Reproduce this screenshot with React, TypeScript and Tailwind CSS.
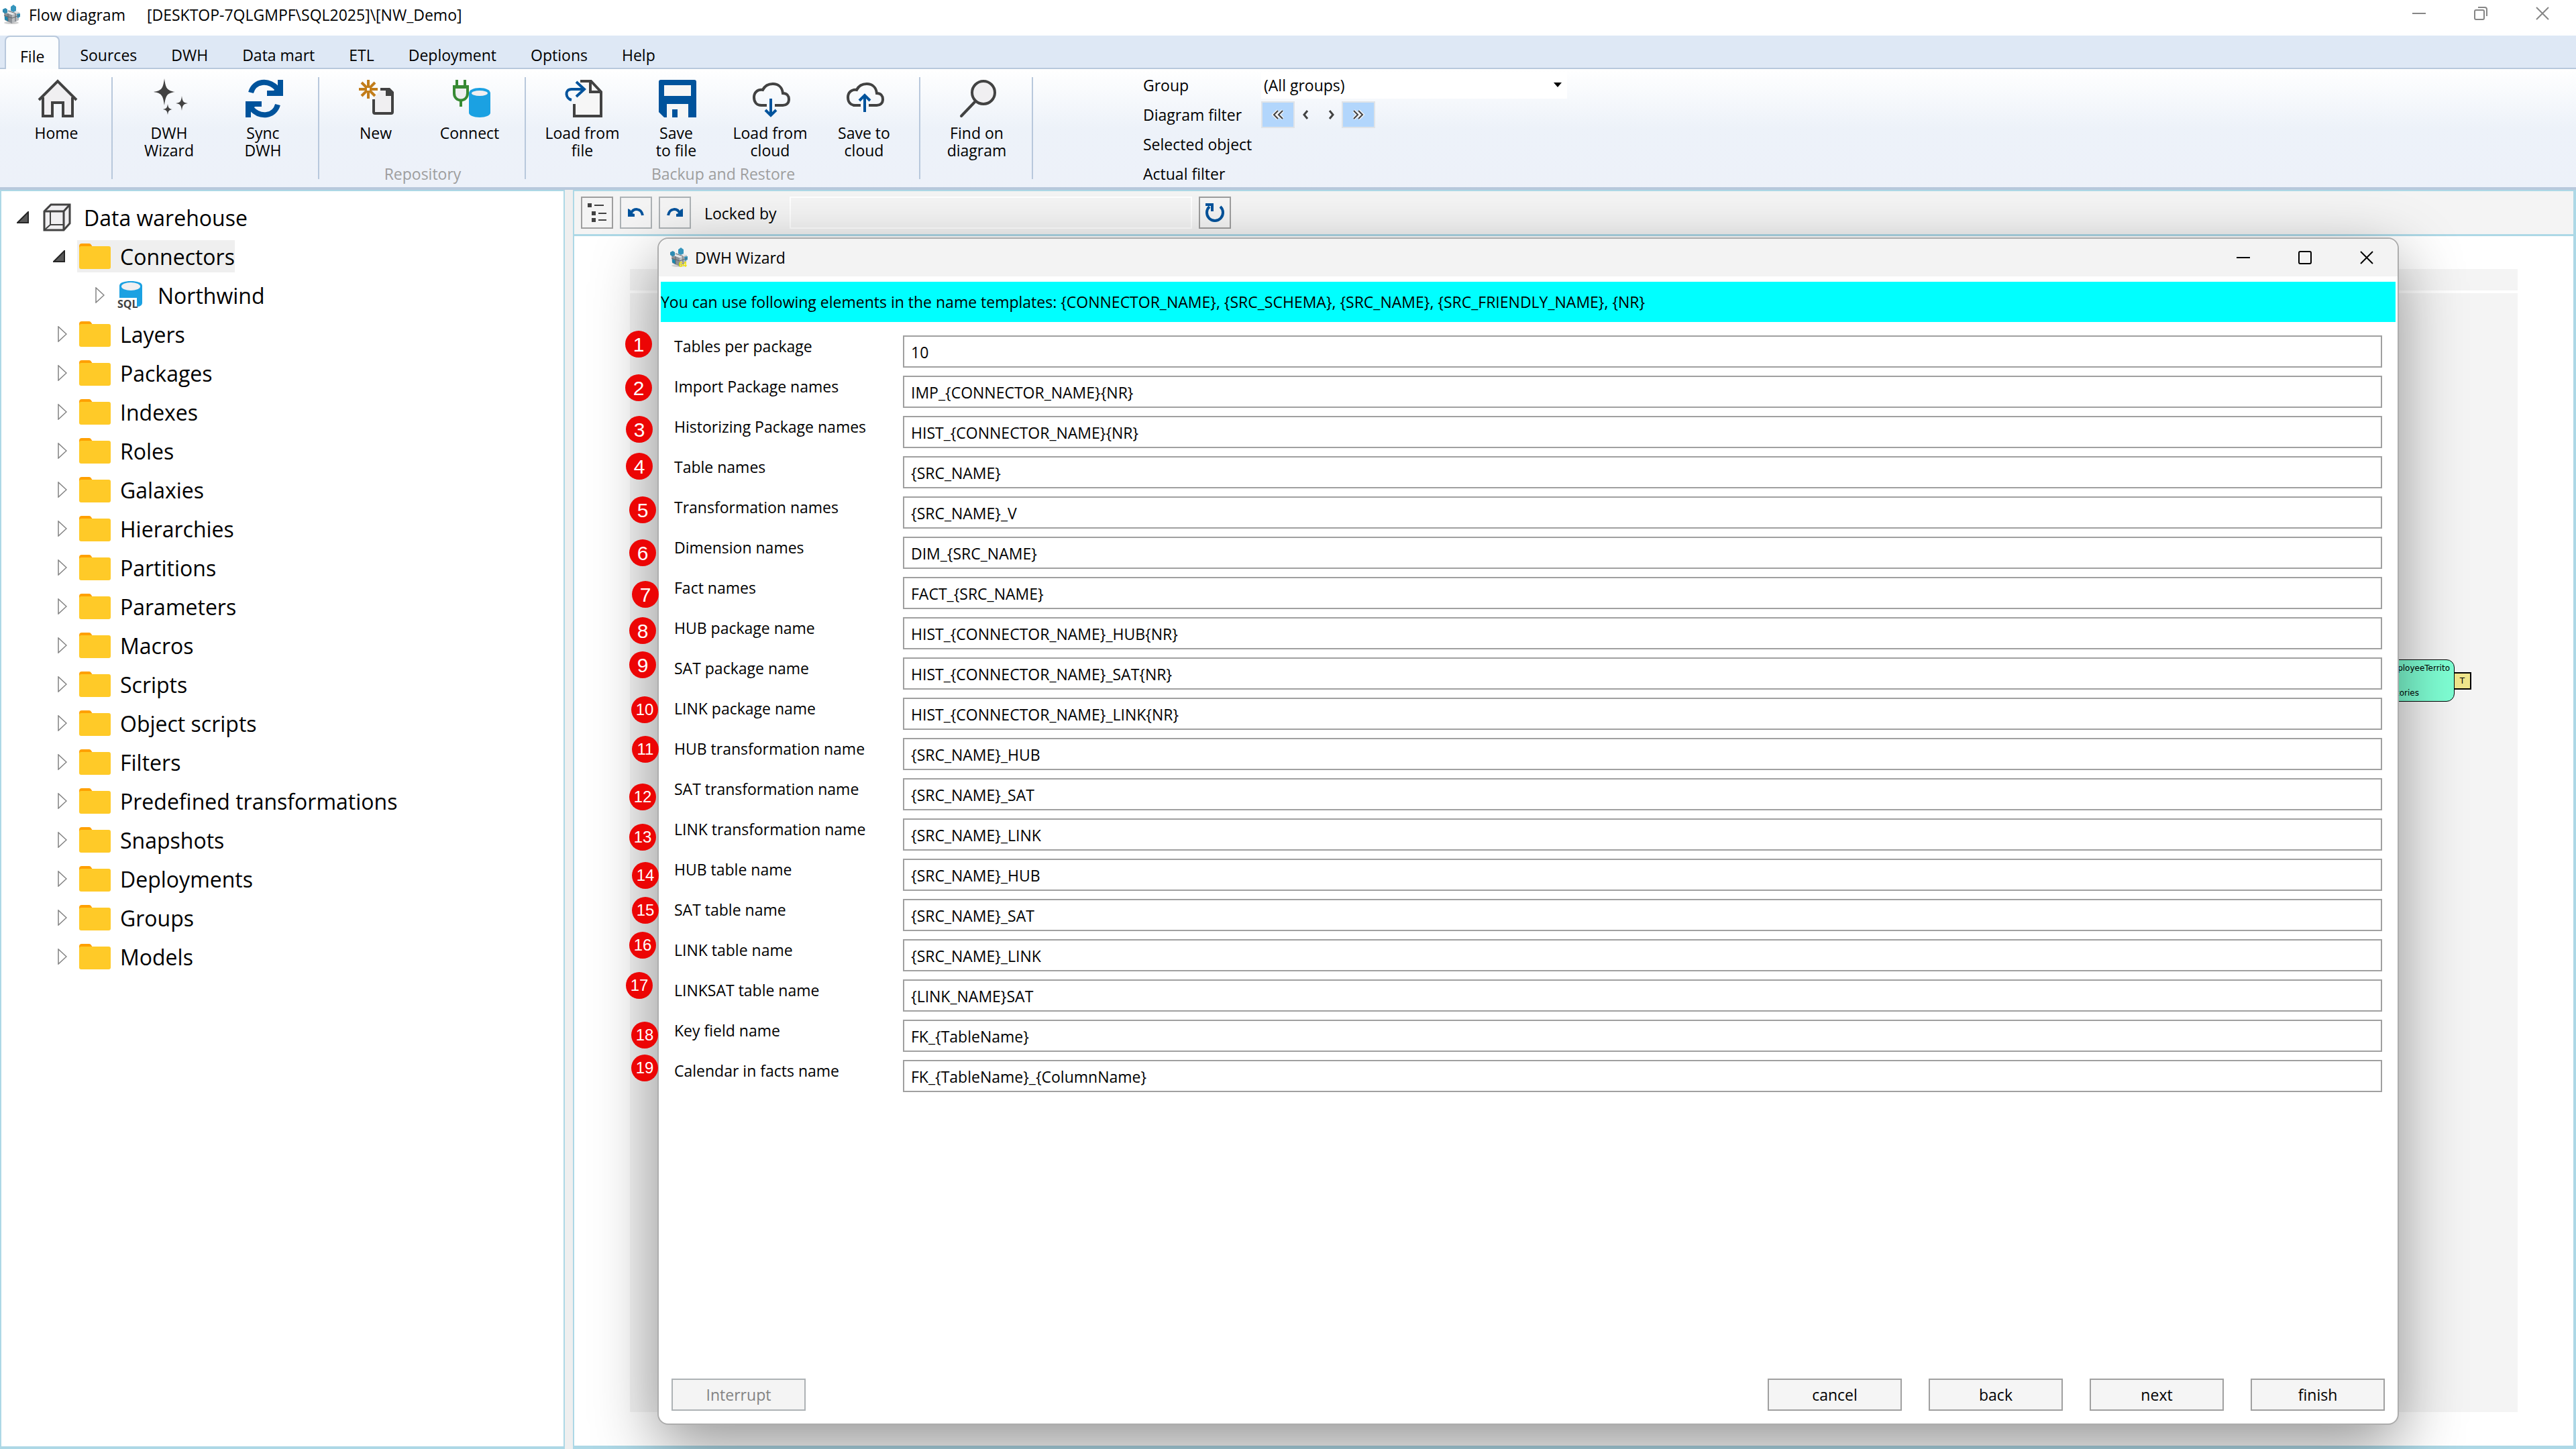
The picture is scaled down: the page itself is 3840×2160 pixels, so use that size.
import type { ReactNode } from "react";
import clsx from "clsx";

/* ---------- ribbon icons, all on a 64 grid ---------- */

const Icon64 = ({ children }: { children: ReactNode }) => (
  <svg viewBox="0 0 64 64" className="ml-1 size-16 shrink-0" fill="none" aria-hidden="true">
    {children}
  </svg>
);

const HomeIcon = () => (
  <Icon64>
    <path d="M10 30L32 7L54 30V58H40V38H24V58H10Z" fill="#f0eff1" />
    <path d="M4 34L32 6L60 34" stroke="#424242" strokeWidth="4" />
    <path d="M10 30V58H24V38H40V58H54V30" stroke="#424242" strokeWidth="4" />
  </Icon64>
);

const WizardIcon = () => (
  <Icon64>
    <g fill="#424242">
      <path d="M23 2C25 17 27 20 39 22C27 24 25 27 23 42C21 27 19 24 7 22C19 20 21 17 23 2Z" />
      <path d="M49 28C50 36 51 38 58 39C51 40 50 42 49 50C48 42 47 40 40 39C47 38 48 36 49 28Z" />
      <path d="M28 40C29 46 30 47 35 48C30 49 29 50 28 56C27 50 26 49 21 48C26 47 27 46 28 40Z" />
    </g>
  </Icon64>
);

const SyncArrow = () => (
  <>
    <path d="M12 23C17 5 38 3 51 17" stroke="#00539c" strokeWidth="8" />
    <path d="M60 4V28H36V20H46L52 14V4Z" fill="#00539c" />
  </>
);

const SyncIcon = () => (
  <Icon64>
    <SyncArrow />
    <g transform="rotate(180 32 32)">
      <SyncArrow />
    </g>
  </Icon64>
);

const NewIcon = () => (
  <Icon64>
    <path d="M27 32L38 18H51L55 23V54H27Z" fill="#f0eff1" />
    <path d="M27 33V52Q27 54 29 54H53Q55 54 55 52V24" stroke="#424242" strokeWidth="4" />
    <path d="M37 16H51L57 22V28H45V20H37Z" fill="#424242" />
    <path d="M19 4V16M19 20V32M5 18H17M21 18H33M9 8L17 16M21 20L29 28M29 8L21 16M17 20L9 28" stroke="#c27d1a" strokeWidth="4" />
  </Icon64>
);

const ConnectIcon = () => (
  <Icon64>
    <path d="M29 24C29 19 36 16 45 16S61 19 61 24V53C61 57 54 60 45 60S29 57 29 53Z" fill="#1ba1e2" />
    <ellipse cx="45" cy="24" rx="12" ry="4" fill="#f0eff1" />
    <path d="M7 15H27V24C27 38 7 38 7 24Z" fill="#f0eff1" stroke="#388a34" strokeWidth="4" />
    <path d="M5 14H29M11 4V14M23 4V14M17 34V44" stroke="#388a34" strokeWidth="4" />
  </Icon64>
);

const LoadFileIcon = () => (
  <Icon64>
    <path d="M28 6H43L58 21V58H18V38L34 20Z" fill="#f6f6f6" />
    <path d="M27 6H43L58 22V58H18V40" stroke="#424242" strokeWidth="4" />
    <path d="M42 6V22H58" stroke="#424242" strokeWidth="4" />
    <path d="M14 34C5 32 3 18 14 18H33M21 7L33 18L21 29" stroke="#00539c" strokeWidth="4" />
  </Icon64>
);

const SaveIcon = () => (
  <Icon64>
    <path d="M4 7Q4 4 7 4H57Q60 4 60 7V60H12L4 52Z" fill="#00539c" />
    <path d="M12 12H52V28H12ZM16 40H48V60H16Z" fill="#f6f6f6" />
    <path d="M24 48H32V60H24Z" fill="#00539c" />
  </Icon64>
);

const CloudIcon = ({ up }: { up?: boolean }) => (
  <Icon64>
    <path
      d="M25 42H17C10 42 6 37 6 30C6 23 11 18 19 19C22 13 27 10 34 10C42 10 48 15 49 24C55 24 58 28 58 33C58 39 54 42 49 42H37"
      stroke="#424242"
      strokeWidth="4"
    />
    {up ? (
      <path d="M31 52V27M23 35L31 27L39 35" stroke="#00539c" strokeWidth="4" />
    ) : (
      <path d="M31 32V57M23 49L31 57L39 49" stroke="#00539c" strokeWidth="4" />
    )}
  </Icon64>
);

const FindIcon = () => (
  <Icon64>
    <circle cx="40" cy="23" r="17" fill="#f0eff1" stroke="#424242" strokeWidth="4" />
    <path d="M28 36L7 58" stroke="#424242" strokeWidth="4" strokeLinecap="round" />
  </Icon64>
);

/* ---------- logo, tree and toolbar icons ---------- */

const CubeLogo = ({ badge }: { badge?: boolean }) => (
  <svg viewBox="0 0 28 30" className="h-[30px] w-7 shrink-0" aria-hidden="true">
    <ellipse cx="14" cy="27" rx="11" ry="2" fill="#d0d0d0" />
    <path d="M3 11L15 15V28L4 23Z" fill="#8d9297" />
    <path d="M15 15L26 11L25 23L15 28Z" fill="#b9bcbf" />
    <path d="M3 11L14 7L26 11L15 15Z" fill="#e4e6e8" />
    <path d="M13 3L17 0L21 3V9L17 11L13 9Z" fill="#3595bd" />
    <path d="M1 7L5 5L8 7V12L4 13L1 11Z" fill="#2f8bb2" />
    <path d="M4 17L9 19V25L4 22Z" fill="#1c86ae" />
    <path d="M22 14L27 13V18L23 20Z" fill="#2d8fb8" />
    <path d="M3 16L15 20L26 16M9 13V25M20 13V25M9 9L20 13" stroke="#5f656a" strokeWidth="1" fill="none" />
    {badge && (
      <text x="14" y="29" fill="#f2e600" className="font-['Liberation_Sans'] text-[11px] font-bold">
        64
      </text>
    )}
  </svg>
);

const WarehouseIcon = () => (
  <svg viewBox="0 0 42 42" className="size-[42px]" fill="none" stroke="#424242" strokeWidth="3" aria-hidden="true">
    <path d="M2 12L12 2H40V30L31 40H2Z" fill="#f0eff1" />
    <path d="M2 12H31M31 12L40 2M31 12V40" />
    <path d="M11 12V32H31M11 32L2 40" strokeWidth="2" />
  </svg>
);

const FolderIcon = () => (
  <svg viewBox="0 0 47 38" className="h-[38px] w-[47px]" aria-hidden="true">
    <path d="M0 4Q0 0 4 0H15Q17 0 18 2L20 5V12H0Z" fill="#ffa000" />
    <rect y="4" width="47" height="34" rx="3" fill="#ffca28" />
  </svg>
);

const SqlIcon = () => (
  <svg viewBox="0 0 44 46" className="h-[46px] w-11" aria-hidden="true">
    <path d="M4 9C4 4 12 2 21 2S38 4 38 9V34C38 38 35 40 30 40H4Z" fill="#1ba1e2" />
    <ellipse cx="21" cy="10" rx="14" ry="6" fill="#f0eff1" />
    <path d="M0 27H30V45H0Z" fill="#fff" />
    <text x="1" y="42" fill="#424242" className="font-['Open_Sans'] text-[16px] font-bold">
      SQL
    </text>
  </svg>
);

const OpenMark = () => (
  <svg viewBox="0 0 18 18" className="ml-[5px] size-[18px]" aria-hidden="true">
    <path d="M17 1V17H1Z" fill="#595959" stroke="#262626" strokeWidth="2" />
  </svg>
);

const ClosedMark = () => (
  <svg viewBox="0 0 14 24" className="ml-3 h-6 w-3.5" aria-hidden="true">
    <path d="M1 1V23L13 12Z" fill="#fff" stroke="#828282" strokeWidth="1.5" />
  </svg>
);

const OutlineIcon = () => (
  <svg viewBox="0 0 44 44" className="size-11" aria-hidden="true">
    <path d="M8 8H14V14H8ZM14 20H20V26H14ZM14 30H20V36H14ZM18 10H32V12H18ZM24 22H36V24H24ZM24 32H36V34H24Z" fill="#424242" />
  </svg>
);

const UndoIcon = ({ flip }: { flip?: boolean }) => (
  <svg viewBox="0 0 44 44" className={clsx("size-11", flip && "-scale-x-100")} aria-hidden="true">
    <path d="M14 24C18 14 30 15 32 26" stroke="#00539c" strokeWidth="4" fill="none" />
    <path d="M10 16L14 18V22L20 24V28H10Z" fill="#00539c" />
  </svg>
);

const ReloadIcon = () => (
  <svg viewBox="0 0 44 44" className="size-11" aria-hidden="true">
    <path d="M30 13A12 12 0 1 1 14 13" stroke="#00539c" strokeWidth="4" fill="none" />
    <path d="M8 8H20V20H16V12H8Z" fill="#00539c" />
  </svg>
);

const Chevron = ({ d }: { d: string }) => (
  <svg viewBox="0 0 24 24" className="size-6" fill="none" stroke="#424242" strokeWidth="3" aria-hidden="true">
    <path d={d} />
  </svg>
);

const DoubleChevron = ({ d }: { d: string }) => (
  <svg viewBox="0 0 24 24" className="size-6" fill="none" aria-hidden="true">
    <path d={d} stroke="#f0f2f5" strokeWidth="5" />
    <path d={d} stroke="#424242" strokeWidth="2" />
  </svg>
);

/* ---------- data ---------- */

const tabs = ["File", "Sources", "DWH", "Data mart", "ETL", "Deployment", "Options", "Help"];

interface RibbonGroup {
  caption?: string;
  items: { icon: ReactNode; lines: string[] }[];
}

const groups: RibbonGroup[] = [
  { items: [{ icon: <HomeIcon />, lines: ["Home"] }] },
  {
    items: [
      { icon: <WizardIcon />, lines: ["DWH", "Wizard"] },
      { icon: <SyncIcon />, lines: ["Sync", "DWH"] },
    ],
  },
  {
    caption: "Repository",
    items: [
      { icon: <NewIcon />, lines: ["New"] },
      { icon: <ConnectIcon />, lines: ["Connect"] },
    ],
  },
  {
    caption: "Backup and Restore",
    items: [
      { icon: <LoadFileIcon />, lines: ["Load from", "file"] },
      { icon: <SaveIcon />, lines: ["Save", "to file"] },
      { icon: <CloudIcon />, lines: ["Load from", "cloud"] },
      { icon: <CloudIcon up />, lines: ["Save to", "cloud"] },
    ],
  },
  { items: [{ icon: <FindIcon />, lines: ["Find on", "diagram"] }] },
];

const folders = [
  "Layers",
  "Packages",
  "Indexes",
  "Roles",
  "Galaxies",
  "Hierarchies",
  "Partitions",
  "Parameters",
  "Macros",
  "Scripts",
  "Object scripts",
  "Filters",
  "Predefined transformations",
  "Snapshots",
  "Deployments",
  "Groups",
  "Models",
];

const fields = [
  ["Tables per package", "10"],
  ["Import Package names", "IMP_{CONNECTOR_NAME}{NR}"],
  ["Historizing Package names", "HIST_{CONNECTOR_NAME}{NR}"],
  ["Table names", "{SRC_NAME}"],
  ["Transformation names", "{SRC_NAME}_V"],
  ["Dimension names", "DIM_{SRC_NAME}"],
  ["Fact names", "FACT_{SRC_NAME}"],
  ["HUB package name", "HIST_{CONNECTOR_NAME}_HUB{NR}"],
  ["SAT package name", "HIST_{CONNECTOR_NAME}_SAT{NR}"],
  ["LINK package name", "HIST_{CONNECTOR_NAME}_LINK{NR}"],
  ["HUB transformation name", "{SRC_NAME}_HUB"],
  ["SAT transformation name", "{SRC_NAME}_SAT"],
  ["LINK transformation name", "{SRC_NAME}_LINK"],
  ["HUB table name", "{SRC_NAME}_HUB"],
  ["SAT table name", "{SRC_NAME}_SAT"],
  ["LINK table name", "{SRC_NAME}_LINK"],
  ["LINKSAT table name", "{LINK_NAME}SAT"],
  ["Key field name", "FK_{TableName}"],
  ["Calendar in facts name", "FK_{TableName}_{ColumnName}"],
];

// numbered callouts, placed by hand along the dialog's left edge
const markers = [
  [-50, 137],
  [-50, 202],
  [-49, 264],
  [-49, 319],
  [-44, 384],
  [-44, 448],
  [-40, 510],
  [-44, 564],
  [-44, 615],
  [-41, 682],
  [-40, 741],
  [-44, 812],
  [-44, 872],
  [-40, 929],
  [-40, 981],
  [-44, 1033],
  [-49, 1093],
  [-41, 1167],
  [-41, 1216],
];

/* ---------- parts ---------- */

const WindowButtons = ({ restore }: { restore?: boolean }) => (
  <div className="flex">
    <button aria-label="Minimize" className="flex h-10 w-[92px] items-center justify-center">
      <svg viewBox="0 0 20 20" className="size-5" stroke="currentColor" strokeWidth="2">
        <path d="M0 10H20" />
      </svg>
    </button>
    <button aria-label={restore ? "Restore" : "Maximize"} className="flex h-10 w-[92px] items-center justify-center">
      <svg viewBox="0 0 20 20" className="size-5" fill="none" stroke="currentColor" strokeWidth="2">
        {restore ? (
          <path d="M3 5H13Q15 5 15 7V17Q15 19 13 19H3Q1 19 1 17V7Q1 5 3 5ZM6 1H16Q19 1 19 4V14" />
        ) : (
          <rect x="1" y="1" width="18" height="18" rx="2" />
        )}
      </svg>
    </button>
    <button aria-label="Close" className="flex h-10 w-[92px] items-center justify-center">
      <svg viewBox="0 0 20 20" className="size-5" stroke="currentColor" strokeWidth="2">
        <path d="M1 1L19 19M19 1L1 19" />
      </svg>
    </button>
  </div>
);

const TitleBar = () => (
  <header className="flex h-[53px] items-start bg-white pl-[3px] pr-1">
    <div className="flex h-11 items-center">
      <CubeLogo />
      <span className="ml-3">Flow diagram</span>
      <span className="ml-8">[DESKTOP-7QLGMPF\SQL2025]\[NW_Demo]</span>
    </div>
    <div className="ml-auto text-[#868686]">
      <WindowButtons restore />
    </div>
  </header>
);

const Ribbon = () => (
  <div>
    <nav className="flex h-[50px] items-end gap-[9px] border-b-2 border-[#b8c8dc] bg-[#dee8f5] pl-[7px]">
      {tabs.map((tab, i) => (
        <button
          key={tab}
          className={clsx(
            "h-12 px-[21px] pt-2.5",
            i === 0 && "-mb-0.5 h-[50px] rounded-t-lg border-2 border-b-0 border-[#b8c8dc] bg-[#fbfdfe] px-[19px]"
          )}
        >
          {tab}
        </button>
      ))}
    </nav>
    <div className="flex h-[180px] border-b-4 border-[#b8c8dc] bg-linear-to-b from-white via-[#edf2f9] to-[#edf1f9] pt-3">
      {groups.map((group, i) => (
        <div key={i} className="flex h-[152px] flex-col border-r-2 border-[#b8c8dc] pl-3.5 pr-3">
          <div className="flex">
            {group.items.map((item) => (
              <button key={item.lines.join(" ")} className="flex h-32 w-[140px] flex-col items-center leading-[26px]">
                {item.icon}
                <span className="mt-1.5">
                  {item.lines.map((line) => (
                    <span key={line} className="block">
                      {line}
                    </span>
                  ))}
                </span>
              </button>
            ))}
          </div>
          {group.caption && <div className="text-center leading-8 text-[#9e9e9e]">{group.caption}</div>}
        </div>
      ))}
      <div className="-mt-2.5 ml-[164px] grid auto-rows-[44px] grid-cols-[176px_456px] items-center">
        <label htmlFor="group">Group</label>
        <div className="relative h-10">
          <select id="group" className="size-full appearance-none bg-white pl-1">
            <option>(All groups)</option>
          </select>
          <svg viewBox="0 0 12 7" className="pointer-events-none absolute right-2 top-4 h-[7px] w-3">
            <path d="M0 0H12L6 7Z" fill="#000" />
          </svg>
        </div>
        <span>Diagram filter</span>
        <div className="flex h-10">
          <button aria-label="First" className="flex w-[50px] items-center justify-center border-2 border-[#dfe3e8] bg-[#b2d6fc]">
            <DoubleChevron d="M12 6L6 12L12 18M19 6L13 12L19 18" />
          </button>
          <button aria-label="Previous" className="flex w-[35px] items-center justify-center">
            <Chevron d="M13 6L8 12L13 18" />
          </button>
          <button aria-label="Next" className="flex w-[35px] items-center justify-center">
            <Chevron d="M11 6L16 12L11 18" />
          </button>
          <button aria-label="Last" className="flex w-[50px] items-center justify-center border-2 border-[#dfe3e8] bg-[#b2d6fc]">
            <DoubleChevron d="M5 6L11 12L5 18M12 6L18 12L12 18" />
          </button>
        </div>
        <span className="col-span-2">Selected object</span>
        <span className="col-span-2">Actual filter</span>
      </div>
    </div>
  </div>
);

interface TreeRowProps {
  label: string;
  icon: ReactNode;
  indent: string;
  open?: boolean;
  selected?: boolean;
}

const TreeRow = ({ label, icon, indent, open, selected }: TreeRowProps) => (
  <li className={clsx("flex h-[58px] items-center", indent)}>
    <span className="w-[41px]">{open ? <OpenMark /> : <ClosedMark />}</span>
    <span className={clsx("flex h-12 items-center pl-[3px]", selected && "bg-[#efefef]")}>
      <span className="w-[61px]">{icon}</span>
      <span className="pt-0.5">{label}</span>
    </span>
  </li>
);

const Tree = () => (
  <aside className="w-[842px] shrink-0 border-2 border-b-4 border-[#add8e6] bg-white pt-2.5">
    <ul className="text-[32px]">
      <TreeRow label="Data warehouse" icon={<WarehouseIcon />} indent="pl-[18px]" open />
      <TreeRow label="Connectors" icon={<FolderIcon />} indent="pl-[72px]" open selected />
      <TreeRow label="Northwind" icon={<SqlIcon />} indent="pl-[128px]" />
      {folders.map((name) => (
        <TreeRow key={name} label={name} icon={<FolderIcon />} indent="pl-[72px]" />
      ))}
    </ul>
  </aside>
);

const DiagramToolbar = () => (
  <div className="flex h-[67px] items-center border-b-[3px] border-[#add8e6] bg-[#f4f4f4] pl-2.5">
    <div className="flex gap-2.5">
      <button aria-label="Outline" className="size-12 border-2 border-[#9e9e9e]">
        <OutlineIcon />
      </button>
      <button aria-label="Undo" className="size-12 border-2 border-[#adb2b5]">
        <UndoIcon />
      </button>
      <button aria-label="Redo" className="size-12 border-2 border-[#adb2b5]">
        <UndoIcon flip />
      </button>
    </div>
    <label htmlFor="locked" className="ml-5 w-[127px] pt-0.5">
      Locked by
    </label>
    <input id="locked" readOnly className="h-12 w-[600px] border-2 border-white bg-[#f4f4f4]" />
    <button aria-label="Reload" className="ml-2.5 size-12 border-2 border-[#9e9e9e] bg-[#f5f5f5]">
      <ReloadIcon />
    </button>
  </div>
);

const Dialog = () => (
  <section
    role="dialog"
    aria-labelledby="wizard-title"
    className="absolute bottom-[31px] left-[124px] right-[260px] top-[69px] flex flex-col rounded-2xl border-2 border-[#adadad] bg-white shadow-[0_32px_96px_rgba(0,0,0,0.42)]"
  >
    <div className="flex h-14 items-center rounded-t-2xl bg-[#f3f3f3] pl-4">
      <CubeLogo badge />
      <h1 id="wizard-title" className="ml-2.5">
        DWH Wizard
      </h1>
      <div className="ml-auto">
        <WindowButtons />
      </div>
    </div>
    <p className="mx-[3px] mt-2 flex h-[60px] items-center bg-[#00ffff]">
      {"You can use following elements in the name templates: {CONNECTOR_NAME}, {SRC_SCHEMA}, {SRC_NAME}, {SRC_FRIENDLY_NAME}, {NR}"}
    </p>
    <form className="mt-5 flex flex-1 flex-col">
      <div className="grid auto-rows-[48px] grid-cols-[341px_1fr] gap-y-3 px-[23px]">
        {fields.map(([label, value], i) => (
          <div key={label} className="contents">
            <label htmlFor={`field-${i}`} className="leading-8">
              {label}
            </label>
            <input id={`field-${i}`} defaultValue={value} className="border-2 border-[#a0a0a0] bg-white px-2.5 pt-0.5" />
          </div>
        ))}
      </div>
      <div className="mt-auto flex gap-10 px-[19px] pb-[19px]">
        <button type="button" disabled className="mr-auto h-12 w-[200px] border-2 border-[#adb2b5] bg-[#f4f4f4] text-[#838383]">
          Interrupt
        </button>
        {["cancel", "back", "next", "finish"].map((name) => (
          <button key={name} type="button" className="h-12 w-[200px] border-2 border-[#a0a0a0] bg-[#f5f5f5]">
            {name}
          </button>
        ))}
      </div>
    </form>
    {markers.map(([x, y], i) => (
      <span
        key={i}
        style={{ left: x, top: y }}
        className={clsx(
          "absolute flex size-10 items-center justify-center rounded-full bg-[#ec0505] font-['Liberation_Sans',sans-serif] text-white",
          i < 9 ? "text-[30px]" : "text-[24px]"
        )}
      >
        {i + 1}
      </span>
    ))}
  </section>
);

const Workspace = () => (
  <main className="relative flex flex-1 flex-col border-2 border-b-[5px] border-r-4 border-[#add8e6] bg-white">
    <DiagramToolbar />
    <div className="relative flex flex-1 flex-col gap-1 px-[83px] pb-[50px] pt-[49px]">
      <div className="h-8 bg-[#f4f4f4]" />
      <div className="flex-1 bg-[#f4f4f4]" />
      {/* end of the table node that sticks out from behind the dialog */}
      <div className="absolute right-[152px] top-[631px] flex items-center font-['DejaVu_Sans',sans-serif] text-[12px] leading-3">
        <div className="flex h-[63px] w-[140px] flex-col justify-between rounded-xl border border-black bg-[#7fffd4] py-1.5">
          <span className="pr-1.5 text-right">ployeeTerrito</span>
          <span className="pr-[52px] text-right">tories</span>
        </div>
        <div className="flex h-[26px] w-[25px] items-center justify-center border-2 border-l-0 border-black bg-[#f0e68c]">T</div>
      </div>
    </div>
    <Dialog />
  </main>
);

export default function App() {
  return (
    <div className="flex min-h-screen flex-col bg-[#efefef] font-['Open_Sans',sans-serif] text-[23px] text-black">
      <TitleBar />
      <Ribbon />
      <div className="flex flex-1 gap-3">
        <Tree />
        <Workspace />
      </div>
    </div>
  );
}
